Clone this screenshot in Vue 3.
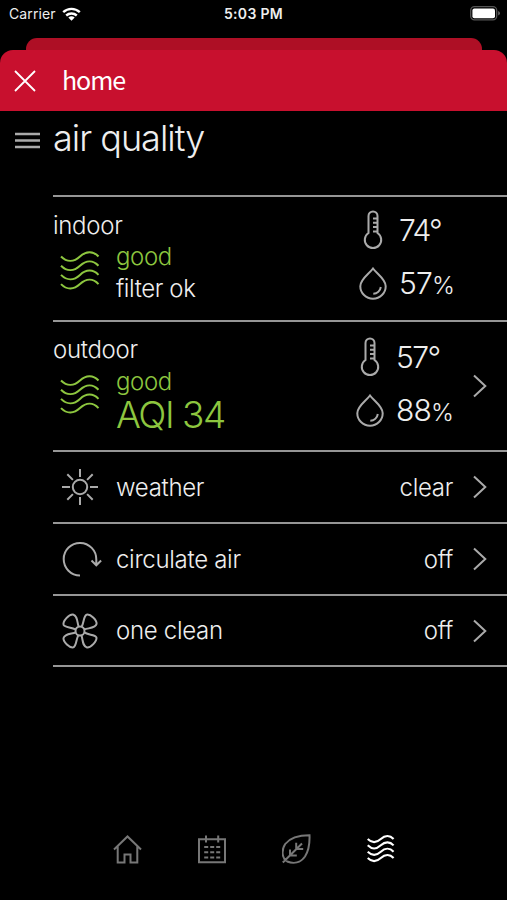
<script setup>
import {ref} from 'vue'

const WAVES = 'M1 6.5C7 12.5 14 12 20 6.5S33 .5 38.5 6.5 M1 15.7C7 21.7 14 21.2 20 15.7S33 9.7 38.5 15.7 M1 24.9C7 30.9 14 30.4 20 24.9S33 18.9 38.5 24.9 M1 34.1C7 40.1 14 39.6 20 34.1S33 28.1 38.5 34.1'

const zones = ref([
  {name: 'indoor', status: 'good', detail: 'filter ok', temp: 74, humidity: 57},
  {name: 'outdoor', status: 'good', detail: 'AQI 34', temp: 57, humidity: 88, link: true}
])

const rows = ref([
  {
    key: 'weather',
    label: 'weather',
    value: 'clear',
    icon: 'M20 1v8 M20 29v8 M2 19h8 M30 19h8 M7.3 6.3l5.6 5.6 M27.1 26.1l5.6 5.6 M7.3 31.7l5.6-5.6 M27.1 11.9l5.6-5.6 M27.2 19a7.2 7.2 0 1 1-14.4 0a7.2 7.2 0 1 1 14.4 0'
  },
  {
    key: 'circulate',
    label: 'circulate air',
    value: 'off',
    icon: 'M20 35.5A16.3 16.3 0 1 1 36.3 19.5V25 M31.5 20.5l4.8 4.8l4.8-4.8'
  },
  {
    key: 'clean',
    label: 'one clean',
    value: 'off',
    icon: 'M24.5 19a4.5 4.5 0 1 1-9 0a4.5 4.5 0 1 1 9 0 M15.8 17.6C11.5 14.8 5 15.8 3.6 12.8C2.6 9 9 2.3 13 2.6C17.5 3.6 17 9.5 18.6 14.7 M21.6 14.8C24 11 23.4 4 26.6 2.7C30.5 1.8 36.9 8 36.6 11.8C35.8 16 29.5 15.8 24.3 17.5 M24.2 20.4C28 23.2 35 22.3 36.4 25.3C37.3 29 31 35.7 27 35.5C22.5 34.3 23 28.5 21.5 23.3 M18.4 23.2C16 27 16.6 34 13.4 35.3C9.5 36.2 3.2 30 3.5 26.2C4.2 22 10.5 22.2 15.8 20.5'
  }
])

const tabs = [
  {key: 'home', icon: 'M1 15.5L14.5 2.5L28 15.5 M4.7 12.5V28.5H11.5V20.5H17.5V28.5H24.3V12.5'},
  {key: 'schedule', icon: 'M1 5.3H27V28.3H1Z M8 1.5V8.5 M20.2 1.5V8.5 M6.2 13h4 M12.2 13h4 M18.2 13h4 M6.2 18.2h4 M12.2 18.2h4 M18.2 18.2h4 M6.2 23.4h4 M12.2 23.4h4 M18.2 23.4h4'},
  {key: 'energy', icon: 'M27.5 1.3C18 1.3 8 4 3.2 10C-1 16.5 0 24.5 5.2 27.5C11.5 30 18.5 29 23 22.5C26.5 17 27.8 9 27.5 1.3Z M.8 28.5L20 9.5 M14.2 8.8v6.3h7 M8 15.5v6h6.8'},
  {key: 'air', icon: WAVES}
]
const activeTab = ref('air')
</script>

<template>
  <div class="phone">
    <div class="status">
      <div class="carrier">
        <span>Carrier</span>
        <svg width="19" height="14" viewBox="0 0 19 14">
          <path d="M1.2 5.2C6 .7 13 .7 17.8 5.2 M4.2 8.5C7.2 5.8 11.8 5.8 14.8 8.5" fill="none" stroke="#fff" stroke-width="2.4" />
          <path d="M6.3 10.4Q9.5 7.9 12.7 10.4L9.5 13.7Z" fill="#fff" />
        </svg>
      </div>
      <span class="time">5:03 PM</span>
      <svg class="battery" width="31" height="15" viewBox="0 0 31 15">
        <rect x=".7" y=".7" width="26" height="13.2" rx="3.8" fill="none" stroke="#555" stroke-width="1.3" />
        <rect x="2.4" y="2.4" width="22.6" height="9.8" rx="2" fill="#fff" />
        <path d="M28.2 5v4.6Q30 8.8 30 7.3T28.2 5" fill="#666" />
      </svg>
    </div>

    <div class="sheet-behind"></div>
    <header class="header">
      <svg width="22" height="22" viewBox="0 0 22 22">
        <path d="M1 1L21 21M21 1L1 21" fill="none" stroke="#fff" stroke-width="1.8" />
      </svg>
      <span>home</span>
    </header>

    <div class="title">
      <svg class="menu" width="25" height="17" viewBox="0 0 25 17">
        <path d="M0 2H25M0 8.5H25M0 15H25" />
      </svg>
      <h1>air quality</h1>
    </div>

    <main class="list">
      <section v-for="zone in zones" :key="zone.name" class="zone" :class="zone.name">
        <div class="quality">
          <h2>{{ zone.name }}</h2>
          <div class="reading">
            <svg class="waves" width="40" height="42" viewBox="0 0 40 42">
              <path :d="WAVES" />
            </svg>
            <div class="lines">
              <span class="good">{{ zone.status }}</span>
              <span class="detail">{{ zone.detail }}</span>
            </div>
          </div>
        </div>
        <div class="climate">
          <div class="measure temp">
            <svg width="28" height="40" viewBox="0 0 28 40">
              <path d="M9.5 23V6a4.5 4.5 0 0 1 9 0V23A8.2 8.2 0 1 1 9.5 23Z M18 8.5h-4 M18 12.8h-4 M18 17.1h-4 M18 21.4h-4" />
            </svg>
            <span>{{ zone.temp }}°</span>
          </div>
          <div class="measure">
            <svg width="28" height="33" viewBox="0 0 28 33">
              <path d="M14 1.5C10 7 1.3 12 1.3 19.2A12.7 12.5 0 0 0 26.7 19.2C26.7 12 18 7 14 1.5Z M21.8 20A7.8 7.8 0 0 1 14.3 26.7" />
            </svg>
            <span>{{ zone.humidity }}<small>%</small></span>
          </div>
        </div>
        <svg v-if="zone.link" class="chevron" width="14" height="24" viewBox="0 0 14 24">
          <path d="M1 1.5L12.3 12L1 22.5" />
        </svg>
      </section>

      <div v-for="row in rows" :key="row.key" class="row" :class="row.key">
        <svg class="row-icon" width="42" height="38" viewBox="0 0 42 38">
          <path :d="row.icon" />
        </svg>
        <span class="label">{{ row.label }}</span>
        <span class="value">{{ row.value }}</span>
        <svg class="chevron" width="14" height="24" viewBox="0 0 14 24">
          <path d="M1 1.5L12.3 12L1 22.5" />
        </svg>
      </div>
    </main>

    <nav class="tabs">
      <svg
        v-for="tab in tabs"
        :key="tab.key"
        :class="{active: activeTab === tab.key}"
        width="29"
        height="30"
        :viewBox="tab.key === 'air' ? '0 0 42 42' : '0 0 29 30'"
        @click="activeTab = tab.key"
      >
        <path :d="tab.icon" />
      </svg>
    </nav>
  </div>
</template>

<style>
body {
  background: #000;
}
</style>

<style scoped>
.phone {
  display: flex;
  flex-direction: column;
  width: 507px;
  height: 900px;
  overflow: hidden;
  background: #000;
  color: #eee;
  font-family: Inter, "Liberation Sans", sans-serif;
  font-weight: 300;
}

svg {
  display: block;
  flex: none;
}

.status {
  display: grid;
  grid-template-columns: 1fr auto 1fr;
  align-items: center;
  box-sizing: border-box;
  height: 38px;
  padding: 0 6px 11px 9px;
  font-size: 14px;
  line-height: 16px;
}

.carrier {
  display: flex;
  align-items: center;
  gap: 6px;
  font-weight: 400;
  letter-spacing: .1px;
}

.time {
  margin-right: 3px;
  font-weight: 600;
  letter-spacing: .3px;
}

.battery {
  justify-self: end;
}

.sheet-behind {
  height: 12px;
  margin: 0 25px 0 26px;
  border-radius: 11px 11px 0 0;
  background: #ae0f25;
}

.header {
  display: flex;
  align-items: center;
  gap: 26px;
  box-sizing: border-box;
  height: 61px;
  padding-left: 14px;
  border-radius: 13px 13px 0 0;
  background: #c8102e;
  color: #fff;
}

.header span {
  margin-top: -3px;
  font-family: "Noto Sans CJK JP", "Noto Sans", sans-serif;
  font-weight: 400;
  font-size: 25px;
  line-height: 38px;
  letter-spacing: -1.1px;
}

.title {
  display: flex;
  gap: 13px;
  height: 84px;
  padding-left: 15px;
}

.menu {
  margin-top: 21px;
  fill: none;
  stroke: #aaa;
  stroke-width: 2.6;
}

h1 {
  margin: 6px 0 0;
  font-weight: 300;
  font-size: 36px;
  line-height: 42px;
  letter-spacing: -1px;
}

.list {
  margin-left: 53px;
  border-bottom: 2px solid #969696;
}

.zone,
.row {
  display: flex;
  box-sizing: border-box;
  border-top: 2px solid #969696;
}

.indoor {
  height: 125px;
}

.outdoor {
  height: 130px;
}

.quality {
  flex: 1;
  padding-top: 13px;
}

h2 {
  margin: 0;
  font-weight: 300;
  font-size: 24px;
  line-height: 30px;
  letter-spacing: -.3px;
}

.indoor h2 {
  padding-top: 1px;
  line-height: 29px;
}

.reading {
  display: flex;
  gap: 16px;
  padding-left: 7px;
}

.waves {
  margin-top: 10px;
  stroke: #8dc63f;
}

.outdoor .waves {
  margin-top: 9px;
}

.lines {
  display: flex;
  flex-direction: column;
  padding-top: 1px;
  font-size: 24px;
  line-height: 32px;
  letter-spacing: -.4px;
}

.outdoor .lines {
  line-height: 31px;
}

.good,
.outdoor .detail {
  color: #8dc63f;
}

.outdoor .detail {
  font-size: 37px;
  line-height: 35px;
  letter-spacing: -1.5px;
}

.climate {
  display: flex;
  flex-direction: column;
  gap: 13px;
  width: 148px;
  padding-top: 13px;
}

.outdoor .climate {
  width: 97px;
  padding-top: 15px;
}

.measure {
  display: flex;
  align-items: center;
  gap: 12px;
  height: 40px;
  font-size: 30px;
  letter-spacing: -.8px;
  white-space: nowrap;
}

.temp {
  letter-spacing: -1.6px;
}

.measure small {
  font-size: 24.5px;
}

.waves,
.measure svg,
.row-icon,
.chevron,
.tabs svg {
  fill: none;
  stroke-width: 2;
}

.measure svg,
.row-icon,
.chevron {
  stroke: #aaa;
}

.zone .chevron {
  align-self: center;
  margin: 0 20px;
}

.row {
  align-items: center;
  height: 72px;
  padding: 0 20px 0 7px;
  font-size: 24px;
  letter-spacing: -.3px;
}

.clean {
  height: 71px;
}

.label {
  flex: 1;
  margin-left: 14px;
}

.value {
  margin-right: 20px;
}

.tabs {
  display: flex;
  gap: 55.5px;
  margin-top: auto;
  padding: 0 0 36px 113px;
}

.tabs svg {
  stroke: #777;
}

.tabs svg.active {
  stroke: #fff;
  stroke-width: 3;
}
</style>
